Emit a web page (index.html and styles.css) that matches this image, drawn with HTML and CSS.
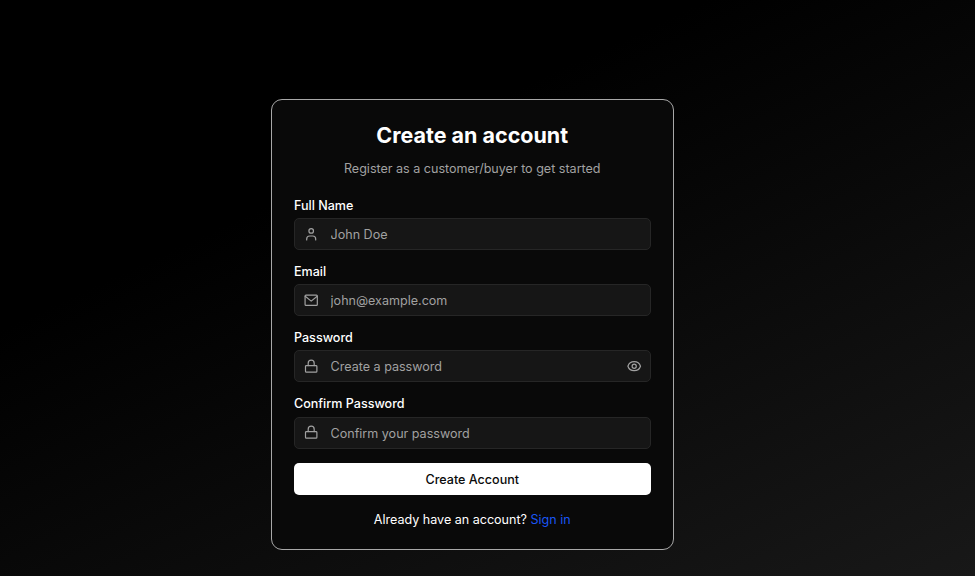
FILE: index.html
```html
<!DOCTYPE html>
<html lang="en">
<head>
<meta charset="utf-8">
<title>Create an account</title>
<link rel="stylesheet" href="styles.css">
</head>
<body>
<main class="card">
  <h1 class="title">Create an account</h1>
  <p class="subtitle">Register as a customer/buyer to get started</p>
  <form class="form">
    <div class="field">
      <label class="label" for="name">Full Name</label>
      <div class="control">
        <svg class="icon" viewBox="0 0 24 24"><circle cx="12" cy="6.500" r="3.800"/><path d="M4.500 21.500v-1.500a5 5 0 0 1 5-5h5a5 5 0 0 1 5 5v1.500"/></svg>
        <input class="input" id="name" type="text" placeholder="John Doe">
      </div>
    </div>
    <div class="field">
      <label class="label" for="email">Email</label>
      <div class="control">
        <svg class="icon" viewBox="0 0 24 24"><rect x="1.800" y="3.500" width="20.400" height="17" rx="1.500"/><path d="m2 5.500 10 8 10-8"/></svg>
        <input class="input" id="email" type="email" placeholder="john@example.com">
      </div>
    </div>
    <div class="field">
      <label class="label" for="password">Password</label>
      <div class="control">
        <svg class="icon" viewBox="0 0 24 24"><rect x="2.500" y="11" width="19" height="11" rx="1.500"/><path d="M7 11V7a5 5 0 0 1 10 0v4"/></svg>
        <input class="input" id="password" type="password" placeholder="Create a password">
        <svg class="icon" viewBox="0 0 24 24"><path d="M1.500 12C3 7.500 7 4.500 12 4.500s9 3 10.500 7.500c-1.500 4.500-5.500 7.500-10.500 7.500S3 16.500 1.500 12Z"/><circle cx="12" cy="12" r="3.500"/></svg>
      </div>
    </div>
    <div class="field">
      <label class="label" for="confirm">Confirm Password</label>
      <div class="control">
        <svg class="icon" viewBox="0 0 24 24"><rect x="2.500" y="11" width="19" height="11" rx="1.500"/><path d="M7 11V7a5 5 0 0 1 10 0v4"/></svg>
        <input class="input" id="confirm" type="password" placeholder="Confirm your password">
      </div>
    </div>
    <button class="submit" type="button">Create Account</button>
  </form>
  <p class="footer">Already have an account? <a class="link" href="#">Sign in</a></p>
</main>
</body>
</html>
```
FILE: styles.css
```css
* { box-sizing: border-box; }
body {
  margin: 0;
  height: 576px;
  overflow: hidden;
  padding: 98.500px 0 0 271px;
  background: linear-gradient(155deg, #000 32%, #181818);
  color: #fff;
  font-family: Inter, sans-serif;
  font-size: 12.550px;
}
.card {
  width: 402.500px;
  height: 451.500px;
  padding: 21px 22px;
  background: #090909;
  border: 1px solid #a8a8a8;
  border-radius: 11px;
}
.title { margin: 0; font-size: 21.500px; line-height: 29px; font-weight: 700; text-align: center; }
.subtitle { margin: 9px 0 0; line-height: 20px; text-align: center; color: #a1a1a1; }
.form { display: grid; gap: 14px; margin-top: 19px; }
.field { display: grid; gap: 4.200px; }
.label { font-size: 12.550px; font-weight: 500; line-height: 16px; }
.control {
  display: flex;
  align-items: center;
  height: 32.100px;
  padding: 0 8px 0 9.300px;
  gap: 11.900px;
  background: #161616;
  border: 1px solid #262626;
  border-radius: 5px;
}
.icon { flex: none; width: 14.400px; height: 14.400px; fill: none; stroke: #a1a1a1; stroke-width: 2; stroke-linecap: round; stroke-linejoin: round; }
.input { flex: 1; min-width: 0; padding: 1px 0 0; border: 0; background: none; color: #fff; font: inherit; outline: 0; }
.input::placeholder { color: #a1a1a1; opacity: 1; }
.submit { height: 32.800px; padding-top: 2px; border: 0; border-radius: 5px; background: #fff; color: #0a0a0a; font: 500 12.550px Inter, sans-serif; }
.footer { margin: 14.700px 0 0; line-height: 20px; text-align: center; }
.link { color: #1a56f5; text-decoration: none; }
```
